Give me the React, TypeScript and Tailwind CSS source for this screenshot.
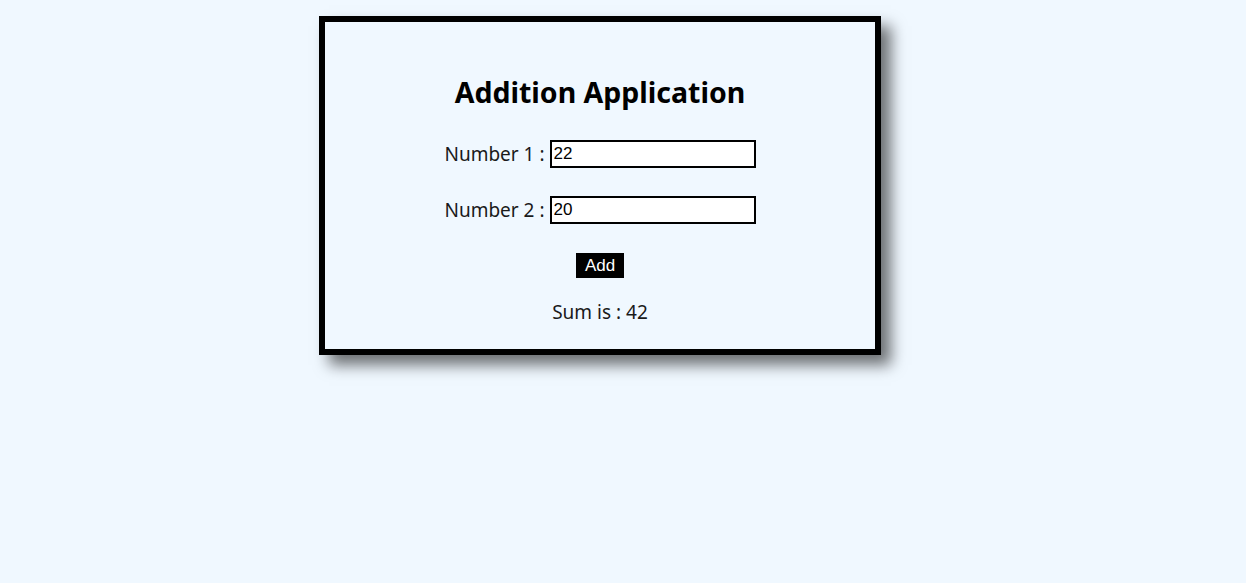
import React, { useState } from 'react';

const App: React.FC = () => {
    const [num1, setNum1] = useState('22');
    const [num2, setNum2] = useState('20');
    const [sum, setSum] = useState<number>(42);

    const handleAdd = () => {
        setSum(Number(num1) + Number(num2));
    };

    return (
        <div className="min-h-screen w-full bg-[#f0f8ff] font-['Noto_Sans',sans-serif] text-[#1a1a1a]">
            <div className="w-[1200px] pt-4">
                <div className="mx-auto w-[562px] h-[339px] border-[6px] border-black bg-[#f0f8ff] shadow-[10px_10px_14px_rgba(0,0,0,0.55)] flex flex-col items-center pt-[52px]">
                    <h1 className="text-[28.5px] font-bold text-black leading-[36px]">Addition Application</h1>
                    <div className="mt-[30px] flex items-center h-[28px]">
                        <label htmlFor="num1" className="text-[19px] mr-[5px]">Number 1 :</label>
                        <input
                            id="num1"
                            className="w-[206px] h-[28px] border-2 border-black bg-white px-[2px] text-[17px] text-black font-['Liberation_Sans',sans-serif] outline-none"
                            value={num1}
                            onChange={(e) => setNum1(e.target.value)}
                        />
                    </div>
                    <div className="mt-[28px] flex items-center h-[28px]">
                        <label htmlFor="num2" className="text-[19px] mr-[5px]">Number 2 :</label>
                        <input
                            id="num2"
                            className="w-[206px] h-[28px] border-2 border-black bg-white px-[2px] text-[17px] text-black font-['Liberation_Sans',sans-serif] outline-none"
                            value={num2}
                            onChange={(e) => setNum2(e.target.value)}
                        />
                    </div>
                    <button
                        onClick={handleAdd}
                        className="mt-[29px] w-[48px] h-[25px] bg-black text-white text-[17px] font-['Liberation_Sans',sans-serif] leading-none"
                    >
                        Add
                    </button>
                    <p className="mt-[21px] text-[19px] leading-[26px]">Sum is : {sum}</p>
                </div>
            </div>
        </div>
    );
};

export default App;
